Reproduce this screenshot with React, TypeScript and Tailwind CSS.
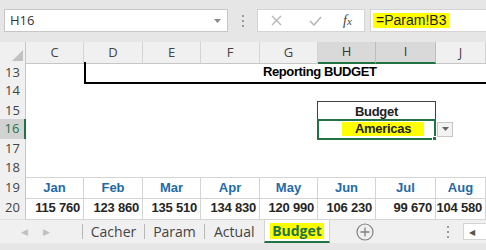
import React from "react";

const GRID = "grid grid-cols-[26px_58px_59px_58px_59px_58px_58px_60px_50px]";
const UI = { fontFamily: '"Open Sans", "Noto Sans", sans-serif' };
const CELL = { fontFamily: '"Liberation Sans", Arial, sans-serif' };

const months = ["Jan", "Feb", "Mar", "Apr", "May", "Jun", "Jul", "Aug"];
const values = ["115 760", "123 860", "135 510", "134 830", "120 990", "106 230", "99 670", "104 580"];

function RowHead({ n, active = false }: { n: number; active?: boolean }) {
  return (
    <div
      style={UI}
      className={
        active
          ? "flex items-center justify-center border-r-2 border-r-[#217346] border-b border-b-[#d4d4d4] bg-[#d2d2d2] text-[13px] text-[#217346]"
          : "flex items-center justify-center border-r border-r-[#c6c6c6] border-b border-b-[#e1e1e1] bg-[#f0f0f0] text-[13px] text-[#444]"
      }
    >
      {n}
    </div>
  );
}

function TopBar() {
  return (
    <div className="flex h-[42px] items-start bg-[#e6e6e6] pt-[9px]">
      <div className="ml-[4px] flex h-[23px] w-[224px] items-center justify-between border border-[#c6c6c6] bg-white pl-[5px] pr-[6px]" style={UI}>
        <span className="text-[13px] text-[#333]">H16</span>
        <svg width="7" height="4" viewBox="0 0 7 4"><path d="M0 0h7L3.5 4z" fill="#8a8a8a" /></svg>
      </div>
      <div className="ml-[14px] mt-[6px] flex flex-col gap-[3px]">
        <span className="h-[2px] w-[2px] bg-[#9a9a9a]" />
        <span className="h-[2px] w-[2px] bg-[#9a9a9a]" />
        <span className="h-[2px] w-[2px] bg-[#9a9a9a]" />
      </div>
      <div className="ml-[13px] flex h-[23px] w-[108px] items-center border border-[#d4d4d4] bg-white">
        <svg className="ml-[13px]" width="11" height="11" viewBox="0 0 11 11">
          <path d="M1 1l9 9M10 1l-9 9" stroke="#b5b5b5" strokeWidth="1.3" />
        </svg>
        <svg className="ml-[27px]" width="13" height="10" viewBox="0 0 13 10">
          <path d="M1 5l4 4 7-8" stroke="#b5b5b5" strokeWidth="1.5" fill="none" />
        </svg>
        <span className="ml-[21px] text-[14px] italic text-[#444]" style={{ fontFamily: '"Liberation Serif", serif' }}>
          f<span className="text-[11px]">x</span>
        </span>
      </div>
      <div className="ml-[5px] flex h-[23px] flex-1 items-center border border-r-0 border-[#d4d4d4] bg-white pl-[2px]">
        <span className="bg-[#ffff00] px-[3px] text-[14px] leading-[15px] text-[#222]" style={CELL}>
          =Param!B3
        </span>
      </div>
    </div>
  );
}

function ColHeads() {
  const cols = ["C", "D", "E", "F", "G", "H", "I", "J"];
  return (
    <div className={`${GRID} h-[20px]`} style={UI}>
      <div className="flex items-end justify-end border-r border-b border-[#c6c6c6] bg-[#f0f0f0] p-[2px]">
        <svg width="11" height="11" viewBox="0 0 11 11"><path d="M11 0v11H0z" fill="#c1c1c1" /></svg>
      </div>
      {cols.map((c) => {
        const sel = c === "H" || c === "I";
        return (
          <div
            key={c}
            className={
              sel
                ? "flex items-center justify-center border-r border-r-[#bdbdbd] border-b-2 border-b-[#217346] bg-[#d9d9d9] text-[13px] text-[#333]"
                : "flex items-center justify-center border-r border-r-[#d4d4d4] border-b border-b-[#c6c6c6] bg-[#f0f0f0] text-[13px] text-[#444]"
            }
          >
            {c}
          </div>
        );
      })}
    </div>
  );
}

function Sheet() {
  return (
    <div className="bg-white" style={CELL}>
      <div className={`${GRID} h-[19px]`}>
        <RowHead n={13} />
        <div />
        <div className="col-span-7 flex items-center border-l-2 border-b-2 border-black pl-[177px] text-[13px] font-bold tracking-[-0.4px] text-black">
          Reporting BUDGET
        </div>
      </div>
      <div className={`${GRID} h-[19px]`}>
        <RowHead n={14} />
      </div>
      <div className={`${GRID} h-[19px]`}>
        <RowHead n={15} />
        <div className="col-span-5" />
        <div className="col-span-2 -ml-px mt-px flex items-center justify-center border-x border-t border-[#3f3f3f] text-[13px] font-bold tracking-[-0.3px] text-[#222]">
          Budget
        </div>
      </div>
      <div className={`${GRID} h-[20px]`}>
        <RowHead n={16} active />
        <div className="col-span-5" />
        <div className="relative col-span-2 -ml-px flex items-center border-2 border-[#217346] pl-[23px]">
          <span className="bg-[#ffff00] px-[13px] text-[13px] font-bold leading-[14px] tracking-[-0.3px] text-[#222]">
            Americas
          </span>
          <span className="absolute -bottom-[3px] -right-[3px] h-[5px] w-[5px] border border-white bg-[#217346]" />
        </div>
        <div className="flex items-center pl-[1px]">
          <div className="flex h-[15px] w-[16px] items-center justify-center border border-[#c6c6c6] bg-[#f3f3f3]">
            <svg width="7" height="4" viewBox="0 0 7 4"><path d="M0 0h7L3.5 4z" fill="#666" /></svg>
          </div>
        </div>
      </div>
      <div className={`${GRID} h-[19px]`}>
        <RowHead n={17} />
      </div>
      <div className={`${GRID} h-[19px]`}>
        <RowHead n={18} />
      </div>
      <div className={`${GRID} h-[20px]`}>
        <RowHead n={19} />
        {months.map((m) => (
          <div key={m} className="flex items-center justify-center border-t border-r border-b border-[#d4d4d4] text-[13px] font-bold text-[#1f6aa5]">
            {m}
          </div>
        ))}
      </div>
      <div className={`${GRID} h-[23px]`}>
        <RowHead n={20} />
        {values.map((v) => (
          <div key={v} className="flex items-center justify-end border-r border-b border-[#d4d4d4] pr-[3px] text-[13px] font-bold tracking-[-0.2px] text-[#262626]">
            <span className="whitespace-nowrap">{v}</span>
          </div>
        ))}
      </div>
    </div>
  );
}

function Tabs() {
  return (
    <div className="flex h-[30px] flex-col" style={UI}>
      <div className="flex h-[23px] items-stretch bg-[#f0f0f0] text-[14px] text-[#444]">
        <div className="flex w-[82px] items-center">
          <span className="ml-[21px] text-[9px] text-[#c0c0c0]">◀</span>
          <span className="ml-[15px] text-[9px] text-[#c0c0c0]">▶</span>
        </div>
        <div className="my-[4px] w-px bg-[#b8b8b8]" />
        <div className="flex w-[61px] items-center justify-center">Cacher</div>
        <div className="my-[4px] w-px bg-[#b8b8b8]" />
        <div className="flex w-[59px] items-center justify-center">Param</div>
        <div className="my-[4px] w-px bg-[#b8b8b8]" />
        <div className="flex w-[59px] items-center pl-[9px]">Actual</div>
        <div className="flex w-[66px] items-center justify-center border-x border-[#d4d4d4] border-b-2 border-b-[#217346] bg-white">
          <span className="bg-[#ffff00] px-[2px] text-[14px] font-bold leading-[16px] text-[#217346]">Budget</span>
        </div>
        <div className="flex w-[70px] items-center justify-center">
          <svg width="18" height="18" viewBox="0 0 18 18">
            <circle cx="9" cy="9" r="8" stroke="#808080" strokeWidth="1.2" fill="none" />
            <path d="M9 4.5v9M4.5 9h9" stroke="#808080" strokeWidth="1.3" />
          </svg>
        </div>
        <div className="flex-1" />
        <div className="flex flex-col justify-center gap-[3px] pr-[14px]">
          <span className="h-[2px] w-[2px] bg-[#9a9a9a]" />
          <span className="h-[2px] w-[2px] bg-[#9a9a9a]" />
          <span className="h-[2px] w-[2px] bg-[#9a9a9a]" />
        </div>
        <div className="my-[3px] flex w-[23px] items-center border border-r-0 border-[#d4d4d4] bg-white pl-[5px]">
          <span className="text-[8px] text-[#555]">◀</span>
        </div>
      </div>
      <div className="h-[7px] bg-[#e6e6e6]" />
    </div>
  );
}

export default function App() {
  return (
    <div className="h-[250px] w-[486px] overflow-hidden bg-white">
      <TopBar />
      <ColHeads />
      <Sheet />
      <Tabs />
    </div>
  );
}
